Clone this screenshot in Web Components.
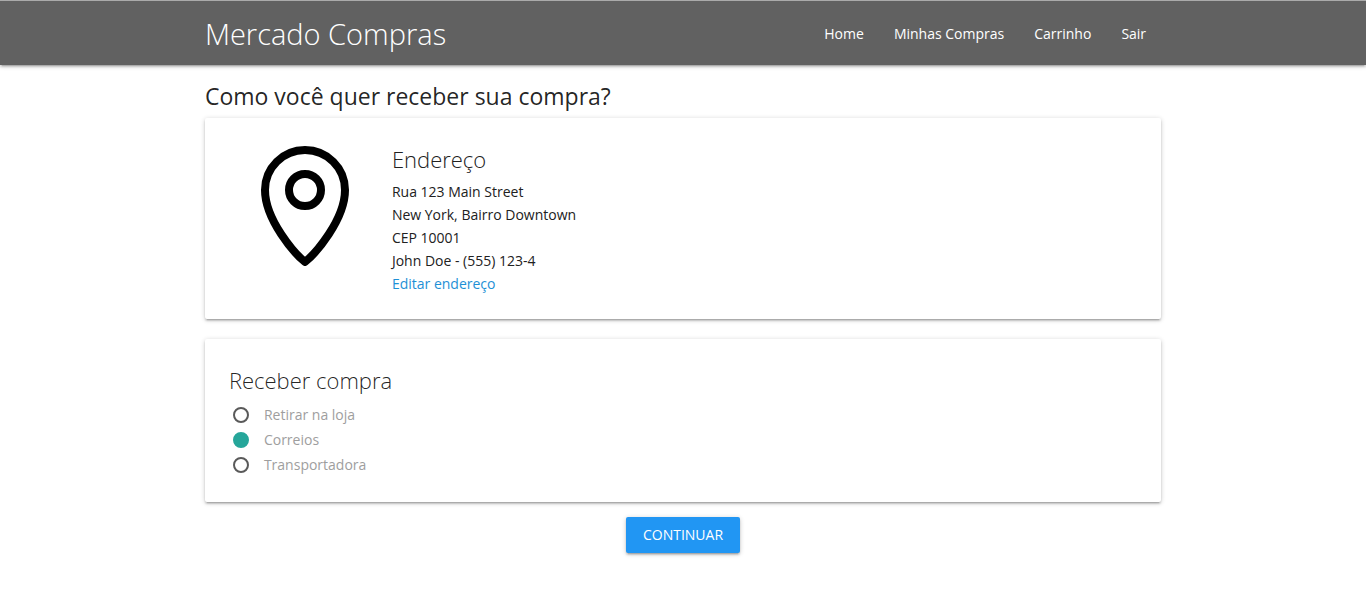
<!DOCTYPE html>
<html lang="pt-BR">
<head>
<meta charset="utf-8">
<meta name="viewport" content="width=device-width, initial-scale=1">
<title>Mercado Compras</title>
<style>
body { margin: 0; background: #fff; color: rgba(0,0,0,.87); font: 14px/23px "Open Sans", "Noto Sans", sans-serif; }
</style>
</head>
<body>
<checkout-page></checkout-page>
<script>
const define = (name, html) => customElements.define(name, class extends HTMLElement {
  constructor() {
    super();
    this.attachShadow({ mode: "open" }).innerHTML = html;
  }
});

define("site-header", `
<style>
:host { display: block; background: #616161; color: #fff; border-top: 1px solid #aaa; box-shadow: 0 2px 2px rgba(0,0,0,.14), 0 3px 1px -2px rgba(0,0,0,.12), 0 1px 5px rgba(0,0,0,.2); }
header { box-sizing: border-box; width: 70%; height: 64px; margin: 0 auto; display: flex; justify-content: space-between; align-items: center; }
a { color: inherit; text-decoration: none; white-space: nowrap; }
.brand { font-size: 29px; line-height: 64px; font-weight: 300; padding-top: 2px; }
nav { display: flex; gap: 30px; padding: 2px 15px 0; }
</style>
<header>
  <a class="brand" href="#">Mercado Compras</a>
  <nav><slot></slot></nav>
</header>`);

define("nav-link", `
<style>
:host { display: block; }
a { color: #fff; text-decoration: none; white-space: nowrap; line-height: 64px; }
</style>
<a href="#"><slot></slot></a>`);

define("content-card", `
<style>
:host { display: block; padding: 24px; border-radius: 2px; background: #fff; box-shadow: 0 2px 2px rgba(0,0,0,.14), 0 3px 1px -2px rgba(0,0,0,.12), 0 1px 5px rgba(0,0,0,.2); }
</style>
<slot></slot>`);

define("card-title", `
<style>
:host { display: block; }
h2 { margin: 0; font-size: 22px; line-height: 34px; font-weight: 300; }
</style>
<h2><slot></slot></h2>`);

define("pin-icon", `
<style>
:host { display: block; width: 120px; height: 120px; }
svg { display: block; width: 100%; height: 100%; }
</style>
<svg viewBox="0 0 120 120" fill="none" stroke="#000" stroke-width="8" stroke-linejoin="round" aria-hidden="true">
  <path d="M60 116C50 108 20 74 20 44a40 40 0 0 1 80 0c0 30-30 64-40 72z"/>
  <circle cx="60" cy="44" r="16"/>
</svg>`);

define("delivery-address", `
<style>
:host { display: flex; gap: 27px; padding: 0 16px; }
pin-icon { margin-top: 4px; }
address { font-style: normal; color: #212121; }
card-title { margin-bottom: 4px; }
p { margin: 0; }
a { color: #1e90d6; text-decoration: none; }
</style>
<pin-icon></pin-icon>
<address>
  <card-title>Endereço</card-title>
  <p>Rua 123 Main Street</p>
  <p>New York, Bairro Downtown</p>
  <p>CEP 10001</p>
  <p>John Doe - (555) 123-4</p>
  <a href="#">Editar endereço</a>
</address>`);

define("delivery-options", `
<style>
:host { display: block; }
fieldset { border: 0; margin: 0; padding: 5px 0 1px; }
label { display: flex; align-items: center; gap: 15px; height: 25px; color: #9e9e9e; }
input { appearance: none; box-sizing: border-box; width: 16px; height: 16px; margin: 0 0 0 4px; border: 2px solid #5a5a5a; border-radius: 50%; }
input:checked { border-color: #26a69a; background: #26a69a; }
</style>
<card-title>Receber compra</card-title>
<fieldset aria-label="Receber compra">
  <label><input type="radio" name="delivery">Retirar na loja</label>
  <label><input type="radio" name="delivery" checked>Correios</label>
  <label><input type="radio" name="delivery">Transportadora</label>
</fieldset>`);

define("action-button", `
<style>
:host { display: block; }
button { height: 36px; padding: 0 17px 2px; border: 0; border-radius: 2px; background: #2196f3; color: #fff; font: inherit; text-transform: uppercase; cursor: pointer; box-shadow: 0 2px 2px rgba(0,0,0,.14), 0 3px 1px -2px rgba(0,0,0,.12), 0 1px 5px rgba(0,0,0,.2); }
</style>
<button type="button"><slot></slot></button>`);

define("checkout-page", `
<style>
:host { display: block; }
main { width: 70%; margin: 0 auto; padding-top: 13px; }
h1 { margin: 0; font-size: 23px; line-height: 36px; font-weight: 400; padding-bottom: 4px; }
content-card + content-card { margin-top: 20px; }
.actions { display: flex; justify-content: center; padding: 15px 0; }
</style>
<site-header>
  <nav-link>Home</nav-link>
  <nav-link>Minhas Compras</nav-link>
  <nav-link>Carrinho</nav-link>
  <nav-link>Sair</nav-link>
</site-header>
<main>
  <h1>Como você quer receber sua compra?</h1>
  <content-card><delivery-address></delivery-address></content-card>
  <content-card><delivery-options></delivery-options></content-card>
  <div class="actions"><action-button>Continuar</action-button></div>
</main>`);
</script>
</body>
</html>
